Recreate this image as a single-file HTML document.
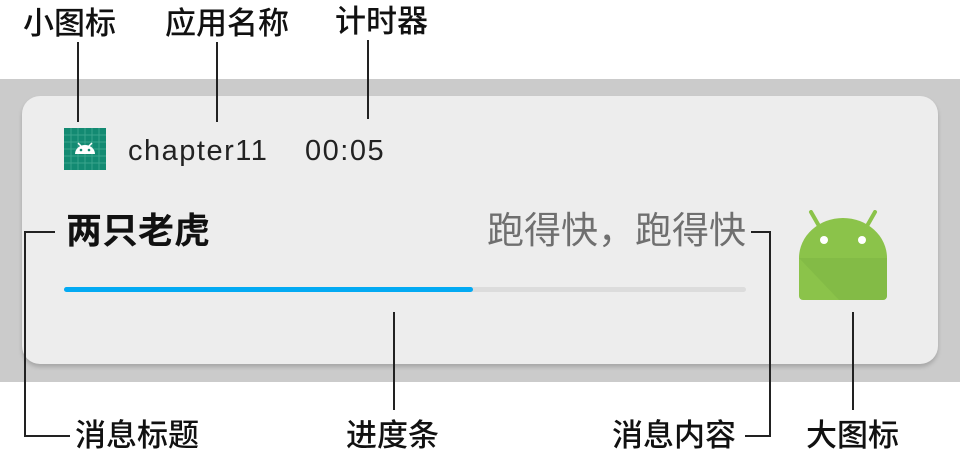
<!DOCTYPE html>
<html><head><meta charset="utf-8"><style>
*{margin:0;padding:0}
body{width:960px;height:457px;background:#fff;position:relative;overflow:hidden;font-family:"Liberation Sans","Noto Sans CJK SC",sans-serif}
.a{position:absolute}
.lab{position:absolute;font-family:"Liberation Sans","Noto Sans CJK SC",sans-serif;font-size:31px;line-height:34px;color:#111;font-weight:500;white-space:nowrap}
.ln{position:absolute;background:#222}
</style></head><body>
<div class="a" style="left:0;top:79px;width:960px;height:303px;background:#cbcbcb"></div>
<div class="a" style="left:22px;top:96px;width:916px;height:268px;background:#ededed;border-radius:18px;box-shadow:0 3px 4px rgba(0,0,0,.18)"></div>
<svg class="a" style="left:64px;top:128px" width="42" height="42" viewBox="0 0 42 42">
<rect width="42" height="42" fill="#138a72"/>
<g stroke="#3aa48c" stroke-width="1"><path d="M7 0V42M14 0V42M21 0V42M28 0V42M35 0V42M0 7H42M0 14H42M0 21H42M0 28H42M0 35H42"/></g>
<path d="M11 26a10 9 0 0 1 20 0z" fill="#fff"/><path d="M14 15l3 3M28 15l-3 3" stroke="#fff" stroke-width="1.5"/>
<circle cx="17" cy="22" r="1.3" fill="#138a72"/><circle cx="25" cy="22" r="1.3" fill="#138a72"/>
</svg>
<div class="a" style="left:128px;top:133px;font-size:29px;letter-spacing:1.5px;color:#222;line-height:36px">chapter11</div>
<div class="a" style="left:305px;top:133px;font-size:29px;letter-spacing:1.5px;color:#222;line-height:36px">00:05</div>
<div class="a" style="left:66px;top:209px;font-size:36px;font-weight:bold;color:#111;line-height:44px;white-space:nowrap">两只老虎</div>
<div class="a" style="left:446px;top:209px;width:300px;text-align:right;font-size:37px;color:#6f6f6f;line-height:44px;white-space:nowrap">跑得快，跑得快</div>
<div class="a" style="left:64px;top:287px;width:682px;height:5px;background:#dcdcdc;border-radius:3px"></div>
<div class="a" style="left:64px;top:287px;width:409px;height:5px;background:#03aaf3;border-radius:3px"></div>
<svg class="a" style="left:799px;top:210px" width="88" height="90" viewBox="0 0 88 90">
<path d="M12 2l8 14M76 2l-8 14" stroke="#8bc34a" stroke-width="4" stroke-linecap="round"/>
<path d="M0 48a44 40 0 0 1 88 0V86a4 4 0 0 1-4 4H4a4 4 0 0 1-4-4z" fill="#8bc34a"/>
<path d="M0 48H88V86a4 4 0 0 1-4 4H40z" fill="#7cb342" opacity=".5"/>
<circle cx="25" cy="30" r="4" fill="#fff"/><circle cx="63" cy="30" r="4" fill="#fff"/>
</svg>
<div class="lab" style="left:23px;top:7px">小图标</div>
<div class="lab" style="left:165px;top:7px">应用名称</div>
<div class="lab" style="left:335px;top:5px">计时器</div>
<div class="ln" style="left:77px;top:42px;width:2px;height:80px"></div>
<div class="ln" style="left:216px;top:42px;width:2px;height:80px"></div>
<div class="ln" style="left:367px;top:40px;width:2px;height:79px"></div>
<div class="lab" style="left:75px;top:419px">消息标题</div>
<div class="lab" style="left:346px;top:419px">进度条</div>
<div class="lab" style="left:612px;top:419px">消息内容</div>
<div class="lab" style="left:806px;top:419px">大图标</div>
<div class="ln" style="left:24px;top:231px;width:2px;height:206px"></div>
<div class="ln" style="left:24px;top:231px;width:31px;height:2px"></div>
<div class="ln" style="left:24px;top:435px;width:46px;height:2px"></div>
<div class="ln" style="left:393px;top:312px;width:2px;height:98px"></div>
<div class="ln" style="left:769px;top:231px;width:2px;height:206px"></div>
<div class="ln" style="left:751px;top:231px;width:20px;height:2px"></div>
<div class="ln" style="left:745px;top:435px;width:26px;height:2px"></div>
<div class="ln" style="left:852px;top:312px;width:2px;height:98px"></div>
</body></html>
